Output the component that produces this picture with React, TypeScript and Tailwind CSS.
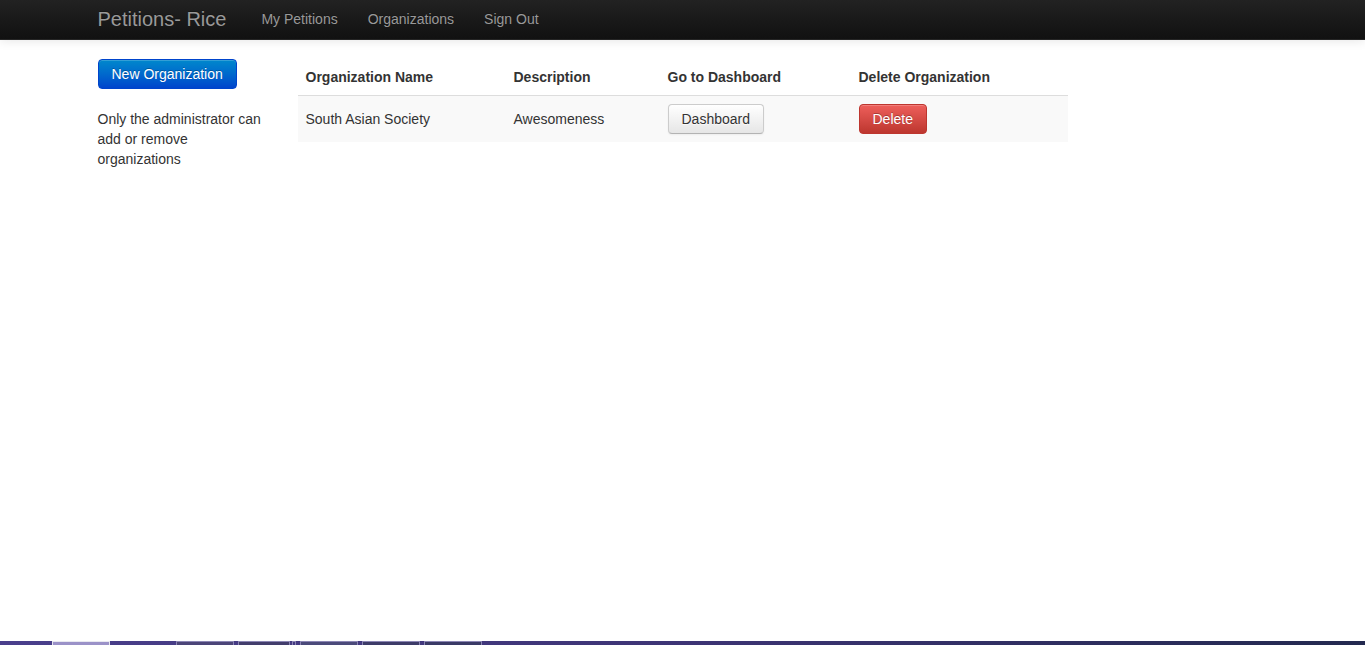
import { JSX } from "react";

const orgs = [{ name: "South Asian Society", description: "Awesomeness" }];

export default function App(): JSX.Element {
    return (
        <div className="h-screen flex flex-col bg-white text-[14px] leading-5 text-[#333] font-['Liberation_Sans',Arial,sans-serif]">
            {/* Navbar */}
            <div className="h-10 shrink-0 bg-gradient-to-b from-[#222] to-[#111] border-b border-[#252525] shadow-[0_1px_10px_rgba(0,0,0,0.1)]">
                <div className="w-[1170px] mx-auto flex items-center h-full pb-[2px]">
                    <a className="text-[20px] leading-5 text-[#999] pr-5 [text-shadow:0_-1px_0_rgba(0,0,0,0.25)]">Petitions- Rice</a>
                    <nav className="flex">
                        {["My Petitions", "Organizations", "Sign Out"].map((item) => (
                            <a key={item} className="px-[15px] text-[#999] [text-shadow:0_-1px_0_rgba(0,0,0,0.25)]">
                                {item}
                            </a>
                        ))}
                    </nav>
                </div>
            </div>

            {/* Content */}
            <div className="flex-1 w-[1170px] mx-auto flex gap-[30px] pt-[19px]">
                {/* Sidebar */}
                <div className="w-[170px] shrink-0">
                    <button className="h-[30px] px-[13px] rounded text-white border border-[#0044cc] bg-gradient-to-b from-[#0088cc] to-[#0044cc] [text-shadow:0_-1px_0_rgba(0,0,0,0.25)] shadow-[inset_0_1px_0_rgba(255,255,255,0.2)]">
                        New Organization
                    </button>
                    <p className="mt-5">Only the administrator can add or remove organizations</p>
                </div>

                {/* Table */}
                <div className="w-[770px]">
                    <table className="w-full border-collapse">
                        <thead>
                            <tr className="text-left">
                                <th className="w-[208px] p-2 font-bold align-bottom">Organization Name</th>
                                <th className="w-[154px] p-2 font-bold align-bottom">Description</th>
                                <th className="w-[191px] p-2 font-bold align-bottom">Go to Dashboard</th>
                                <th className="p-2 font-bold align-bottom">Delete Organization</th>
                            </tr>
                        </thead>
                        <tbody>
                            {orgs.map((org) => (
                                <tr key={org.name} className="bg-[#f9f9f9] border-t border-[#ddd]">
                                    <td className="p-2 align-middle">{org.name}</td>
                                    <td className="p-2 align-middle">{org.description}</td>
                                    <td className="p-2">
                                        <button className="h-[30px] px-[13px] rounded text-[#333] border border-[#ccc] border-b-[#b3b3b3] bg-gradient-to-b from-white to-[#e6e6e6] [text-shadow:0_1px_1px_rgba(255,255,255,0.75)] shadow-[inset_0_1px_0_rgba(255,255,255,0.2),0_1px_2px_rgba(0,0,0,0.05)]">
                                            Dashboard
                                        </button>
                                    </td>
                                    <td className="p-2">
                                        <button className="h-[30px] px-[13px] rounded text-white border border-[#bd362f] bg-gradient-to-b from-[#ee5f5b] to-[#bd362f] [text-shadow:0_-1px_0_rgba(0,0,0,0.25)] shadow-[inset_0_1px_0_rgba(255,255,255,0.2)]">
                                            Delete
                                        </button>
                                    </td>
                                </tr>
                            ))}
                        </tbody>
                    </table>
                </div>
            </div>

            {/* Taskbar edge peeking in at the bottom */}
            <div className="h-1 shrink-0 flex bg-gradient-to-r from-[#4a3f8c] via-[#3d3475] to-[#23294f]">
                <div className="w-[52px]" />
                <div className="w-[58px] border-t border-x border-[#e8e8f0] bg-[#9b92c8]" />
                <div className="w-[66px]" />
                <div className="w-[58px] border-t border-x border-[#8c86b4] bg-[#4b4578]" />
                <div className="w-[4px]" />
                <div className="w-[52px] border-t border-x border-[#8c86b4] bg-[#423d6c]" />
                <div className="w-[2px]" />
                <div className="w-[4px] border-t border-x border-[#8c86b4]" />
                <div className="w-[4px]" />
                <div className="w-[58px] border-t border-x border-[#8c86b4] bg-[#4b4a7a]" />
                <div className="w-[4px]" />
                <div className="w-[58px] border-t border-x border-[#8c86b4] bg-[#3d3b68]" />
                <div className="w-[4px]" />
                <div className="w-[58px] border-t border-x border-[#8c86b4] bg-[#3a3a66]" />
            </div>
        </div>
    );
}
